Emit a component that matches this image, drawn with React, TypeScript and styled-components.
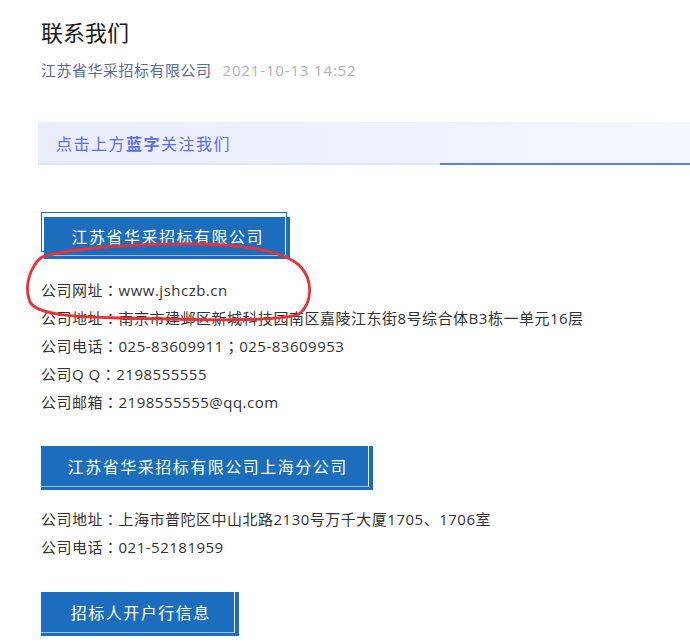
import React from 'react';
import styled, { createGlobalStyle, css } from 'styled-components';

const GlobalStyle = createGlobalStyle`
  html, body { margin: 0; padding: 0; background: #fff; }
  body { font-family: "Noto Sans CJK SC", "Noto Sans", sans-serif; }
`;

const BLUE = '#1c6ebd';

const Page = styled.div`
  position: relative;
  width: 690px;
  height: 643px;
  overflow: hidden;
  box-sizing: border-box;
  padding: 16px 0 0 41px;
`;

const Title = styled.h1`
  margin: 0;
  font-size: 22px;
  line-height: 31px;
  font-weight: 400;
  color: #1a1a1a;
`;

const Meta = styled.div`
  margin-top: 12px;
  display: flex;
  gap: 11px;
  font-size: 15px;
  line-height: 22px;
`;

const Author = styled.span`
  color: #576b95;
  letter-spacing: 0.5px;
`;

const Time = styled.span`
  color: #b2b2b2;
  font-family: "Open Sans", "Noto Sans CJK SC", sans-serif;
  letter-spacing: 0.85px;
`;

const Banner = styled.div`
  position: relative;
  margin: 41px 0 0 -3px;
  height: 41px;
  display: flex;
  align-items: center;
  padding-left: 18px;
  background: linear-gradient(90deg, #e9edfc, #f4f7fe);
  border-bottom: 2px solid #dfe5fb;
  font-size: 16px;
  letter-spacing: 1.5px;
  color: #5b6cf0;
  &::after {
    content: '';
    position: absolute;
    left: 402px;
    right: 0;
    bottom: -2px;
    height: 2px;
    background: #5b7cf7;
  }
`;

const Strong = styled.b`
  font-weight: 700;
`;

const HeadWrap = styled.div<{ $shift?: boolean; $mt: number }>`
  position: relative;
  width: max-content;
  margin-top: ${p => p.$mt}px;
  padding: ${p => (p.$shift ? '5px 0 0 3px' : '0')};
  ${p =>
    p.$shift &&
    css`
      &::before {
        content: '';
        position: absolute;
        left: 0;
        top: 0;
        width: calc(100% - 3px);
        height: 40px;
        border: 1px solid ${BLUE};
        box-sizing: border-box;
      }
    `}
`;

const HeadFill = styled.div<{ $w: number; $h: number }>`
  position: relative;
  width: ${p => p.$w}px;
  height: ${p => p.$h}px;
  box-sizing: border-box;
  padding: 0 0 4px 1.5px;
  display: flex;
  align-items: center;
  justify-content: center;
  background: ${BLUE};
  color: #fff;
  font-size: 16px;
  letter-spacing: 1.5px;
  &::after {
    content: '';
    position: absolute;
    left: 0;
    top: 0;
    right: 4px;
    bottom: 3px;
    border-right: 1px solid rgba(255, 255, 255, 0.9);
    border-bottom: 1px solid rgba(255, 255, 255, 0.55);
  }
`;

const InfoList = styled.div<{ $mt: number }>`
  margin-top: ${p => p.$mt}px;
  font-family: "Open Sans", "Noto Sans CJK SC", sans-serif;
  font-size: 15px;
  line-height: 28px;
  letter-spacing: 0.5px;
  color: #333;
`;

const Line = styled.div`
  white-space: nowrap;
`;

const Punct = styled.span`
  font-family: "Noto Sans CJK TC", sans-serif;
`;

const Annotation = styled.svg`
  position: absolute;
  left: 0;
  top: 0;
  pointer-events: none;
`;

type Section = {
  title: string;
  w: number;
  h: number;
  mt: number;
  listMt: number;
  shift?: boolean;
  lines: string[];
};

const sections: Section[] = [
  {
    title: '江苏省华采招标有限公司',
    w: 246,
    h: 42,
    mt: 47,
    listMt: 17,
    shift: true,
    lines: [
      '公司网址：www.jshczb.cn',
      '公司地址：南京市建邺区新城科技园南区嘉陵江东街8号综合体B3栋一单元16层',
      '公司电话：025-83609911；025-83609953',
      '公司Q Q：2198555555',
      '公司邮箱：2198555555@qq.com',
    ],
  },
  {
    title: '江苏省华采招标有限公司上海分公司',
    w: 332,
    h: 44,
    mt: 30,
    listMt: 15,
    lines: ['公司地址：上海市普陀区中山北路2130号万千大厦1705、1706室', '公司电话：021-52181959'],
  },
  {
    title: '招标人开户行信息',
    w: 198,
    h: 44,
    mt: 31,
    listMt: 15,
    lines: [],
  },
];

function renderLine(text: string) {
  return text.split(/([：；])/).map((part, i) =>
    part === '：' || part === '；' ? <Punct key={i}>{part}</Punct> : <React.Fragment key={i}>{part}</React.Fragment>
  );
}

export default function App() {
  return (
    <>
      <GlobalStyle />
      <Page>
        <Title>联系我们</Title>
        <Meta>
          <Author>江苏省华采招标有限公司</Author>
          <Time>2021-10-13 14:52</Time>
        </Meta>
        <Banner>
          <span>
            点击上方<Strong>蓝字</Strong>关注我们
          </span>
        </Banner>
        {sections.map(s => (
          <React.Fragment key={s.title}>
            <HeadWrap $shift={s.shift} $mt={s.mt}>
              <HeadFill $w={s.w} $h={s.h}>{s.title}</HeadFill>
            </HeadWrap>
            {s.lines.length > 0 && (
              <InfoList $mt={s.listMt}>
                {s.lines.map(l => (
                  <Line key={l}>{renderLine(l)}</Line>
                ))}
              </InfoList>
            )}
          </React.Fragment>
        ))}
        <Annotation width="690" height="643" viewBox="0 0 690 643">
          <path
            d="M 42 257 C 70 248, 140 243, 200 244 C 250 245, 285 252, 300 266 C 314 281, 312 304, 299 314 C 280 322, 200 320, 120 318 C 70 317, 36 314, 30 302 C 25 290, 28 276, 34 266 C 36 262, 39 259, 42 257"
            fill="none"
            stroke="#e8323a"
            strokeWidth="2.8"
            strokeLinecap="round"
          />
        </Annotation>
      </Page>
    </>
  );
}
